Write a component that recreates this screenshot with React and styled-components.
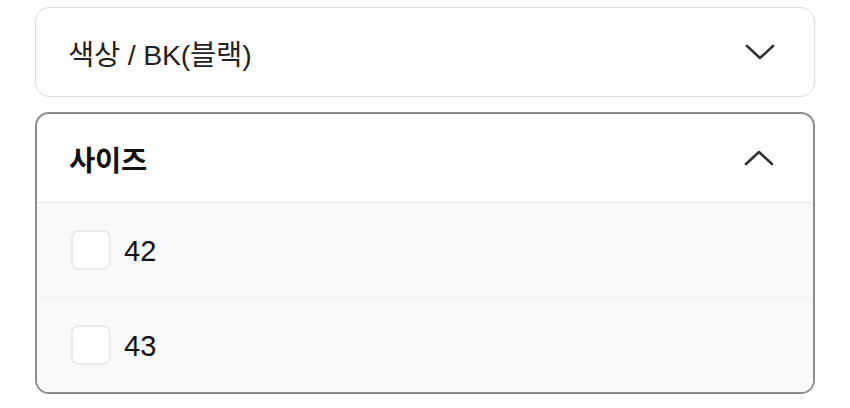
import React, { useState } from "react";
import styled, { createGlobalStyle } from "styled-components";

const GlobalStyle = createGlobalStyle`
  html, body {
    margin: 0;
    padding: 0;
    background: #ffffff;
  }
  body {
    font-family: "Liberation Sans", "Noto Sans CJK KR", sans-serif;
    color: #1a1a1a;
  }
`;

const OptionList = styled.div`
  display: flex;
  flex-direction: column;
  gap: 15px;
  width: 780px;
  padding: 7px 0 0 35px;
`;

const Panel = styled.div`
  border: ${(p) => (p.open ? "2px solid #8e8e8e" : "1.5px solid #dcdcdc")};
  border-radius: 14px;
  overflow: hidden;
  background: #ffffff;
`;

const PanelHeader = styled.div`
  display: flex;
  align-items: center;
  justify-content: space-between;
  box-sizing: border-box;
  height: ${(p) => (p.open ? "89px" : "88px")};
  padding: 0 39px 0 32px;
  border-bottom: ${(p) => (p.open ? "1.5px solid #e6e8eb" : "none")};
  cursor: pointer;
`;

const HeaderLabel = styled.span`
  font-size: 28.5px;
  letter-spacing: -0.2px;
  font-weight: ${(p) => (p.bold ? 700 : 400)};
  color: ${(p) => (p.bold ? "#111" : "#222")};
`;

const Row = styled.label`
  display: flex;
  align-items: center;
  gap: 13px;
  height: 94px;
  padding: 0 34px;
  background: #f8f9fb;
  & + & {
    border-top: 1.5px solid #eff1f3;
  }
`;

const Box = styled.span`
  width: 36px;
  height: 36px;
  border: 2px solid #ebebeb;
  border-radius: 8px;
  background: #ffffff;
  flex-shrink: 0;
`;

const RowText = styled.span`
  font-size: 29px;
  padding-top: 2px;
  color: #111;
`;

const Chevron = ({ up }) => (
  <svg width="30" height="20" viewBox="0 0 30 20" fill="none">
    <path
      d={up ? "M2 16L15 4L28 16" : "M2 4L15 16L28 4"}
      stroke="#333"
      strokeWidth="2.6"
      strokeLinecap="round"
      strokeLinejoin="round"
    />
  </svg>
);

const sizes = ["42", "43"];

export default function App() {
  const [checked, setChecked] = useState({});

  return (
    <>
      <GlobalStyle />
      <OptionList>
        <Panel>
          <PanelHeader>
            <HeaderLabel>색상 / BK(블랙)</HeaderLabel>
            <Chevron />
          </PanelHeader>
        </Panel>
        <Panel open>
          <PanelHeader open>
            <HeaderLabel bold>사이즈</HeaderLabel>
            <Chevron up />
          </PanelHeader>
          {sizes.map((s) => (
            <Row
              key={s}
              onClick={() => setChecked({ ...checked, [s]: !checked[s] })}
            >
              <Box />
              <RowText>{s}</RowText>
            </Row>
          ))}
        </Panel>
      </OptionList>
    </>
  );
}
